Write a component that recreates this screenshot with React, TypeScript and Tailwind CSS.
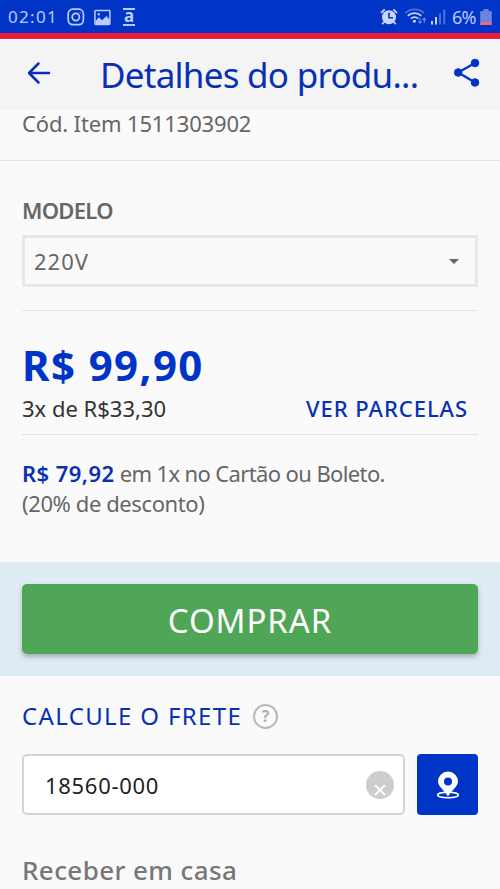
import React from "react";

function StatusBar() {
  return (
    <div className="flex h-[33px] items-center bg-[#0034c6] pt-px text-[#b9cbff]">
      <span className="ml-2 w-[58px] whitespace-nowrap text-[17px] leading-8 tracking-[1.3px]">02:01</span>
      <svg className="ml-[1px]" width="18" height="18" viewBox="0 0 18 18" fill="none" stroke="currentColor" strokeWidth="1.7">
        <rect x="1.2" y="1.2" width="15.2" height="15.4" rx="4.5" />
        <circle cx="8.8" cy="9" r="3.6" />
        <circle cx="13.1" cy="4.7" r=".6" fill="currentColor" stroke="none" />
      </svg>
      <svg className="ml-[9px]" width="17" height="17" viewBox="0 0 17 17" fill="none" stroke="currentColor" strokeWidth="1.5">
        <rect x=".9" y="1.5" width="15" height="14" rx=".7" />
        <path d="M1.5 12l3.5-3.8 3 3 4.500-4.300 3 3.600V15h-14z" fill="currentColor" stroke="none" />
        <circle cx="4.8" cy="5.2" r="1.2" fill="currentColor" stroke="none" />
      </svg>
      <span className="ml-[12px] flex h-[18px] w-[12px] items-center justify-center border-y-2 border-current text-[17px] font-bold leading-[14px]">
        <span className="-mt-[3px]">a</span>
      </span>
      <svg className="ml-auto" width="18" height="18" viewBox="0 0 18 18" fill="none">
        <circle cx="9" cy="9.2" r="7" fill="#c5d5ff" />
        <path d="M1 4.800L4.700 1.400M13.300 1.400L17 4.800M4 14l-1.800 2.300M14 14l1.800 2.300" stroke="#c5d5ff" strokeWidth="1.8" />
        <path d="M9 4.800v5h4" stroke="#0034c6" strokeWidth="1.6" />
      </svg>
      <svg className="ml-[6px]" width="23" height="18" viewBox="0 0 23 18" fill="none" strokeWidth="1.8">
        <path d="M1.400 5.200C6 .2 15-.2 20 5.200" stroke="#4b71df" />
        <path d="M3.800 7.700c4-3.500 9.500-3.500 13.500 0M6.800 10.600c2.500-2 5-2 7.500 0" stroke="#c5d5ff" />
        <circle cx="10.400" cy="13.200" r="1.500" fill="#c5d5ff" />
        <path d="M16 10v5M14.300 13.400l1.700 1.800 1.700-1.800M20.300 15v-5M18.600 11.800L20.300 10l1.700 1.800" stroke="#6788e6" strokeWidth="1.2" />
      </svg>
      <svg className="ml-[3px]" width="17" height="18" viewBox="0 0 17 18">
        <path d="M1 13h2v3.500H1zM5 9h2v7.500H5z" fill="#c5d5ff" />
        <path d="M9 5.500h2v11H9zM13.200 1.500h2v15h-2z" fill="#4b71df" />
      </svg>
      <span className="ml-[5px] w-[26px] whitespace-nowrap text-[18px] leading-8 tracking-[-0.7px]">6%</span>
      <svg className="ml-[2px] mr-[8px]" width="12" height="19" viewBox="0 0 12 19">
        <path d="M3.500 1h5v2H11q.8 0 .8 1v12q0 1-1 1H1.200q-1 0-1-1V4q0-1 1-1h2.300z" fill="#6b84dc" />
        <path d="M.2 14h11.600v2q0 1-1 1H1.200q-1 0-1-1z" fill="#e56c79" />
      </svg>
    </div>
  );
}

function Header() {
  return (
    <header className="flex h-[71px] items-center border-t border-white bg-[#f4f4f4] text-[#0830b5]">
      <svg className="mb-[5px] ml-[27px] shrink-0" width="24" height="24" viewBox="0 0 24 24" fill="none" stroke="currentColor" strokeWidth="2.5" strokeLinecap="round" strokeLinejoin="round">
        <path d="M22 12H2M11.500 2.500L2 12l9.500 9.500" />
      </svg>
      <h1 className="ml-[49px] w-[328px] whitespace-nowrap text-[35px] leading-[44px] tracking-[-0.75px]">Detalhes do produ...</h1>
      <svg className="mb-[5px] ml-[25px] shrink-0" width="28" height="30" viewBox="0 0 28 30" fill="#0034c6" stroke="#0034c6">
        <path d="M22 5L5.200 14.500 22 24.500" fill="none" strokeWidth="2.300" />
        <circle cx="22" cy="5" r="3.800" />
        <circle cx="5.200" cy="14.500" r="3.800" />
        <circle cx="22" cy="24.500" r="3.800" />
      </svg>
    </header>
  );
}

export default function App() {
  return (
    <div className="h-[889px] w-[500px] overflow-hidden bg-[#fafafa] font-['Noto_Sans','Open_Sans',sans-serif] text-[22px] leading-[30px] text-[#666]">
      <StatusBar />
      <div className="h-[6px] bg-[#ed1a3c]" />
      <Header />
      <div className="h-[51px] whitespace-nowrap border-b border-[#e5e5e5] px-[22px]">
        <p className="leading-[26px] tracking-[-0.15px]">Cód. Item 1511303902</p>
      </div>
      <section className="mx-[22px] h-[150px] border-b border-[#e5e5e5] pt-[34px]">
        <h2 className="whitespace-nowrap font-semibold leading-[30px] tracking-[-0.7px]">MODELO</h2>
        <div className="mt-[10px] flex h-[52px] items-center justify-between border-[3px] border-[#e8e8e8] pl-[9px] pr-[16px]">
          <span className="tracking-[1px]">220V</span>
          <span className="border-x-[5px] border-t-[5px] border-x-transparent border-t-[#666]" />
        </div>
      </section>
      <section className="mx-[22px] h-[124px] whitespace-nowrap border-b border-[#e2e2e2] pt-[29px]">
        <p className="text-[42px] font-bold leading-[50px] tracking-[1.4px] text-[#0034c6]">R$ 99,90</p>
        <div className="mt-[3px] flex justify-between pr-[10px]">
          <span className="text-[#333]">3x de R$33,30</span>
          <span className="font-medium tracking-[0.95px] text-[#0830b5]">VER PARCELAS</span>
        </div>
      </section>
      <section className="mx-[22px] h-[127px] whitespace-nowrap pt-[23px]">
        <p><b className="font-semibold tracking-[0.45px] text-[#0830b5]">R$ 79,92</b><span className="tracking-[-0.62px]"> em 1x no Cartão ou Boleto.</span></p>
        <p className="tracking-[-0.4px]">(20% de desconto)</p>
      </section>
      <section className="h-[114px] bg-[#dfebf3] px-[22px] pt-[22px]">
        <button className="flex h-[70px] w-full items-center justify-center rounded-[5px] bg-[#50a657] pt-[3px] text-[33px] leading-[44px] tracking-[0.9px] text-white shadow-[0_3px_5px_rgba(0,0,0,0.25)]">COMPRAR</button>
      </section>
      <section className="px-[22px] pt-[24px]">
        <div className="flex h-[32px] items-center whitespace-nowrap">
          <span className="w-[231px] text-[24px] leading-8 tracking-[1.35px] text-[#0830b5]">CALCULE O FRETE</span>
          <span className="flex h-[25px] w-[25px] items-center justify-center rounded-full border-2 border-[#b9b9b9] text-[16px] font-bold leading-5 text-[#b0b0b0]">?</span>
        </div>
        <div className="mt-[22px] flex gap-[12px]">
          <div className="flex h-[61px] w-[383px] items-center justify-between rounded-[5px] border-2 border-[#d4d4d4] bg-white pl-[21px] pr-[9px] text-[#222]">
            <span className="tracking-[0.7px]">18560-000</span>
            <svg width="28" height="28" viewBox="0 0 28 28">
              <circle cx="14" cy="14" r="14" fill="#cdcdcd" />
              <path d="M9 14l10 10M19 14L9 24" stroke="#fff" strokeWidth="2" />
            </svg>
          </div>
          <button className="flex h-[61px] w-[61px] items-center justify-center rounded-[4px] bg-[#0034c6]">
            <svg width="24" height="28" viewBox="0 0 24 28">
              <ellipse cx="12" cy="24" rx="10.500" ry="2.700" fill="none" stroke="#fff" strokeWidth="1.400" />
              <path fillRule="evenodd" d="M12 25.500C9 20 2 15.500 2 10.500a10 10 0 0 1 20 0c0 5-7 9.500-10 15zM12 6.500a4 4 0 1 0 0 8 4 4 0 0 0 0-8z" fill="#fff" />
            </svg>
          </button>
        </div>
        <h2 className="mt-[38px] whitespace-nowrap text-[26px] font-medium leading-[34px] tracking-[0.4px] text-[#777]">Receber em casa</h2>
      </section>
    </div>
  );
}
